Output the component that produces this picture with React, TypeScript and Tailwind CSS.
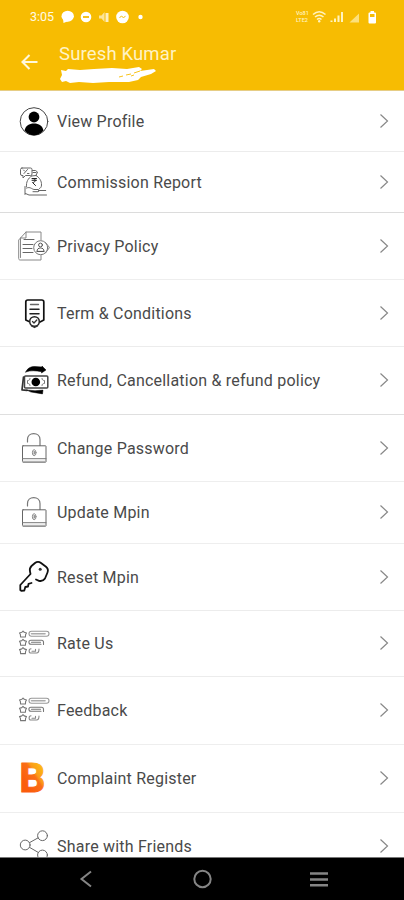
import type { ReactNode } from "react";

function Icon({ children }: { children: ReactNode }) {
  return (
    <svg
      viewBox="0 0 30 30"
      className="size-[30px] shrink-0 overflow-visible"
      fill="none"
      stroke="#666"
      strokeWidth="1"
      strokeLinecap="round"
      strokeLinejoin="round"
    >
      {children}
    </svg>
  );
}

const ProfileIcon = () => (
  <Icon>
    <circle cx="15" cy="15.5" r="13.8" stroke="#444" />
    <circle cx="15" cy="11" r="5.4" fill="#000" stroke="none" />
    <path d="M5.5 24.500c1-4.500 4.500-7 9.500-7s8.500 2.500 9.500 7c-2.500 3-6 4.800-9.500 4.800s-7-1.800-9.500-4.800Z" fill="#000" stroke="none" />
  </Icon>
);

const CommissionIcon = () => (
  <Icon>
    <path d="M3 1h8.500a1.500 1.500 0 0 1 1.500 1.500V7a1.500 1.500 0 0 1-1.500 1.500H6.500L4 11V8.500H3A1.500 1.500 0 0 1 1.500 7V2.500A1.500 1.500 0 0 1 3 1Z" />
    <path d="m5 6.500 3.500-4M4.500 3l1 1M8.500 6.500h1.500M13.500 3.500h3l2 1.500-1.500 3.500M14 5.500h3" />
    <path d="M12.500 9c-3.500 2.500-5.500 6-5 10.500M17 8.500c3.500 2 5.700 5.500 5.500 9.500 0 2-.8 3-2 3.500M12.500 9l4.500-.5" />
    <path d="M13 11.500h4.500M13 13.300h4.500M13.500 11.500c4 0 3.500 4 0 4l3 3" stroke="#222" />
    <path d="M6 19.500v8M7.500 21c4-1.500 5 1 7.500 1.500h4c1.500 0 1.500 2.200 0 2.200h-5M19.500 23.500h7.200M6.500 26.500 10 28h17.500" />
  </Icon>
);

const PrivacyIcon = () => (
  <Icon>
    <g stroke="#888">
      <path d="M22 9V1H7L1.500 7v1.500M7 1v6H1.500M1.500 7-.3 9v18.500c0 1 .5 1.500 1.500 1.500H22v-4.500M1.500 8v18.500" />
      <path d="M5 8.500h10M4 13.500h10M4 17.500h9M4 21.500h10" stroke="#666" />
      <circle cx="21.700" cy="16.700" r="7" fill="#fff" stroke="#777" />
      <path d="m26.500 11.500 4 5-4 5.500" />
      <circle cx="21.500" cy="14" r="1.900" stroke="#555" />
      <path d="M18 20c0-2 1.500-3 3.500-3s3.500 1 3.500 3ZM18 20.500h7" stroke="#555" />
    </g>
  </Icon>
);

const TermsIcon = () => (
  <Icon>
    <path d="M10 23.500 6.800 22V4a2 2 0 0 1 2-2h14a2 2 0 0 1 2 2v18L21 24" stroke="#111" strokeWidth="1.700" />
    <path d="M11.500 6.500h8" stroke="#666" strokeWidth="1.300" />
    <path d="M11 11.200h9M11 15.700h9" stroke="#222" strokeWidth="1.500" />
    <circle cx="15.500" cy="23.500" r="4.800" fill="#fff" stroke="#222" strokeWidth="1.500" />
    <path d="m13.500 23.500 1.500 1.500 2.800-3M12.500 28l3 1.500 3-1.500" stroke="#333" strokeWidth="1.300" />
  </Icon>
);

const RefundIcon = () => (
  <Icon>
    <path d="M6.700 7C8.500 3 12 1.400 16 1.500l7 .5V1l4 4-4.500 3V6.700C17 5.800 12 5 6.700 7Z" fill="#000" stroke="#000" strokeWidth=".5" />
    <rect x="5.500" y="11" width="23.300" height="12" rx="1" stroke="#444" strokeWidth="1.500" />
    <path d="M11 13.500c0 1.500-1 2-2.500 2v3c1.500 0 2.500.5 2.500 2M23 13.500c0 1.500 1 2 2.500 2v3c-1.500 0-2.500.5-2.500 2" stroke="#777" />
    <circle cx="16.800" cy="17" r="4.300" fill="#000" stroke="none" />
    <path d="M4.500 12 3 24.800l5 .5" stroke="#333" strokeWidth="1.700" />
    <path d="m8 25 8 .7 8-.6-.5 3.800L12 27Z" fill="#000" stroke="#000" strokeWidth=".5" />
  </Icon>
);

const LockIcon = () => (
  <Icon>
    <path d="M8.500 9V6.500C8.500 3 11.200.7 14.700.7S21 3 21 6.500v6" stroke="#777" strokeWidth="1.200" />
    <rect x="3.500" y="12.800" width="23.500" height="16.400" rx=".5" />
    <path d="M3.500 25.700H27" stroke="#777" />
    <path d="M3.500 28.300H27" stroke="#aaa" />
    <ellipse cx="15.200" cy="19.700" rx="1.800" ry="3" stroke="#888" />
    <path d="M15.200 18.500v2.500" />
  </Icon>
);

const KeyIcon = () => (
  <Icon>
    <path
      d="M11 9.500C10.500 7.500 11 5.500 12.500 4L16 1c1.800-1.400 4.200-1.400 6 0l5 3.800c1.800 1.500 2.300 3.700 1.500 5.700l-2.500 6c-1.300 2-3.700 2.800-6 2.300l-3-1.300M11 9.500l.5 2.500L1.300 23v5l1 .8 3-.3 1-3.500 2.700-.5.500-2.700 3-.8"
      stroke="#111"
      strokeWidth="1.800"
    />
    <circle cx="21.200" cy="7.300" r="1.500" fill="#333" stroke="none" />
  </Icon>
);

const RateIcon = () => (
  <Icon>
    <g stroke="#777" strokeWidth="1.100">
      <path d="m4 3 1.200 1.300 2.300.7-.9 1.600-.2 2.400H1.600l-.2-2.400L.5 5l2.300-.7Z" />
      <path d="m4 11.300 1.200 1.300 2.300.7-.9 1.600-.2 2.400H1.600l-.2-2.400-.9-1.600 2.300-.7Z" />
      <path d="m4 19.600 1.200 1.300 2.300.7-.9 1.600-.2 2.400H1.600l-.2-2.400-.9-1.600 2.300-.7Z" />
      <rect x="10" y="3.300" width="20" height="5" rx="2.500" stroke="#999" />
      <path d="M12.500 5.800H26" stroke="#aaa" strokeWidth="1.600" />
      <path d="M24.500 16.500v-2.200c0-1.300-.8-2-2-2H12c-2.800 0-2.800 4 0 4h10M12.500 14.300h9" />
      <path d="M12 20.800c-2.500 0-2.500 4.200 0 4.200h5.500c2 0 2.500-1.500 2.500-4M13 23.200h3.500v-2" stroke="#888" />
    </g>
  </Icon>
);

const ComplaintIcon = () => (
  <Icon>
    <defs>
      <linearGradient id="complaint" x1="0.900" y1="0.150" x2="0.400" y2="0.750">
        <stop offset="0.150" stopColor="#fcb813" />
        <stop offset="0.450" stopColor="#fb9a18" />
        <stop offset="0.550" stopColor="#fa7016" />
        <stop offset="1" stopColor="#fb5c0c" />
      </linearGradient>
    </defs>
    <text
      x="0.200"
      y="29.300"
      fontSize="41"
      fontWeight="700"
      fontFamily="Roboto, sans-serif"
      fill="url(#complaint)"
      stroke="url(#complaint)"
      strokeWidth="1"
    >
      B
    </text>
  </Icon>
);

const ShareIcon = () => (
  <Icon>
    <circle cx="23.500" cy="4.700" r="4.900" />
    <circle cx="6.200" cy="14" r="4.900" />
    <circle cx="23.500" cy="24" r="4.900" />
    <path d="m10.600 11.600 8.600-4.800M10.600 16.400l8.600 5" />
  </Icon>
);

const menuItems = [
  { label: "View Profile", icon: <ProfileIcon />, height: "h-[61px]", line: "border-[#ececec]" },
  { label: "Commission Report", icon: <CommissionIcon />, height: "h-[61px]", line: "border-[#dcdcdc]" },
  { label: "Privacy Policy", icon: <PrivacyIcon />, height: "h-[67px]", line: "border-[#eeeeee]" },
  { label: "Term & Conditions", icon: <TermsIcon />, height: "h-[67px]", line: "border-[#ececec]" },
  { label: "Refund, Cancellation & refund policy", icon: <RefundIcon />, height: "h-[68px]", line: "border-[#dfdfdf]" },
  { label: "Change Password", icon: <LockIcon />, height: "h-[67px]", line: "border-[#eeeeee]" },
  { label: "Update Mpin", icon: <LockIcon />, height: "h-[62px]", line: "border-[#eeeeee]" },
  { label: "Reset Mpin", icon: <KeyIcon />, height: "h-[67px]", line: "border-[#ececec]" },
  { label: "Rate Us", icon: <RateIcon />, height: "h-[66px]", line: "border-[#ececec]" },
  { label: "Feedback", icon: <RateIcon />, height: "h-[68px]", line: "border-[#eeeeee]" },
  { label: "Complaint Register", icon: <ComplaintIcon />, height: "h-[68px]", line: "border-[#eeeeee]" },
  { label: "Share with Friends", icon: <ShareIcon />, height: "h-[67px]", line: "border-[#eeeeee]" },
];

function StatusBar() {
  return (
    <div className="flex h-[34px] items-center pr-[26px] pl-[30px] text-white">
      <span className="w-[31px] text-[12.500px] font-normal text-[#fffbe6]">3:05</span>
      <svg width="90" height="16" viewBox="0 0 90 16" fill="#fff">
        <ellipse cx="6.700" cy="7.200" rx="6.200" ry="5.500" />
        <path d="m2 9 .5 5 5-2Z" />
        <circle cx="25" cy="8" r="5.300" />
        <path d="M22 8h6" stroke="#f6bc04" strokeWidth="1.800" />
        <path d="M38 6.500h2.500L43.500 3v10l-3-3.500H38Z" opacity=".6" />
        <path d="M44.500 4h3v9h-3z" opacity=".75" />
        <circle cx="61.500" cy="8" r="6.300" />
        <path d="m58.500 8.500 2-1.200 2 1.200 2-1.200" stroke="#f6bc04" strokeWidth="1" fill="none" />
        <circle cx="79.500" cy="8" r="2.200" />
      </svg>
      <div className="ml-auto flex items-center">
        <span className="flex w-[16px] flex-col text-[5.500px] leading-[7px] font-medium text-[#fff3bf]">
          <span>Vo81</span>
          <span>LTE2</span>
        </span>
        <svg width="66" height="16" viewBox="0 0 66 16" fill="#fff3bf">
          <path d="M1 5.500c4-3.500 8.500-3.500 12.500 0M3 8c2.800-2.300 5.700-2.300 8.500 0M5 10.500c1.500-1.300 3-1.300 4.500 0" stroke="#fff3bf" strokeWidth="1.600" fill="none" />
          <circle cx="7.200" cy="12.200" r="1.200" />
          <path d="M18.500 11.500h2V13h-2zM22 9.500h2V13h-2zM25.500 6.500h2V13h-2zM29 3h2v10h-2z" />
          <path d="M37.500 13.500 47 4.500v9Z" opacity=".65" />
          <path d="M57.500 3.500h1V2h3.500v1.500h1a1 1 0 0 1 1 1v9a1 1 0 0 1-1 1h-5.500a1 1 0 0 1-1-1v-9a1 1 0 0 1 1-1Z" fill="#fff" />
          <path d="M58 5h4.500v3H58z" fill="#f6bc04" />
        </svg>
      </div>
    </div>
  );
}

function Header() {
  return (
    <header className="flex h-[91px] shrink-0 flex-col border-b border-[#e6cd85] bg-[#f7bc02]">
      <StatusBar />
      <div className="flex pl-[21px]">
        <svg width="18" height="16" viewBox="0 0 18 16" className="mt-5 shrink-0" fill="none" stroke="#fff8dc" strokeWidth="2.100">
          <path d="M16.500 8H1.500M8.500 1 1.500 8l7 7" />
        </svg>
        <div className="ml-5 flex flex-col">
          <h1 className="mt-2 text-[18.500px] leading-6 font-normal tracking-[0.150px] text-[#fff3c4]">Suresh Kumar</h1>
          <svg width="98" height="18" viewBox="0 0 98 18" className="mt-px" fill="#fff">
            <path d="m2 3 5 1 2-2 12 1 14-1 18-1 15 1 12-2 3 2-2 2 14-2 2 2-5 3-10 3-3 3-9 2H50l-16 1-14-1-9 1-4-2-4 1-2-3 2-4Z" />
            <path d="m60 10 4-1M67 8l5-1M75 6l6-2M72 9l3-1" stroke="#f7bc02" strokeWidth=".9" />
          </svg>
        </div>
      </div>
    </header>
  );
}

function BottomNav() {
  return (
    <nav className="flex h-[43px] shrink-0 items-center border-t border-[#777] bg-black">
      <svg width="404" height="42" viewBox="0 0 404 42" fill="none" stroke="#858585" strokeWidth="2">
        <path d="m91 13.500-9.500 7.500 9.500 7.500" />
        <circle cx="202.500" cy="21" r="8.200" />
        <path d="M310 15.500h18M310 21.500h18M310 27.200h18" strokeWidth="2.600" />
      </svg>
    </nav>
  );
}

export default function App() {
  return (
    <div className="flex h-[900px] w-[404px] flex-col overflow-hidden bg-white font-[Roboto,sans-serif]">
      <Header />
      <main className="min-h-0 flex-1 overflow-hidden">
        {menuItems.map(({ label, icon, height, line }) => (
          <div key={label} className={`flex items-center border-b pr-[15px] pl-[19px] ${height} ${line}`}>
            <div className="mb-px">{icon}</div>
            <span className="mt-px ml-2 text-[16px] font-normal tracking-[0.210px] whitespace-nowrap text-[#4a4a4a]">{label}</span>
            <svg width="10" height="16" viewBox="0 0 10 16" className="mb-px ml-auto" fill="none" stroke="#888" strokeWidth="1.200">
              <path d="m1.500 1.500 7 6.500-7 6.500" />
            </svg>
          </div>
        ))}
      </main>
      <BottomNav />
    </div>
  );
}
